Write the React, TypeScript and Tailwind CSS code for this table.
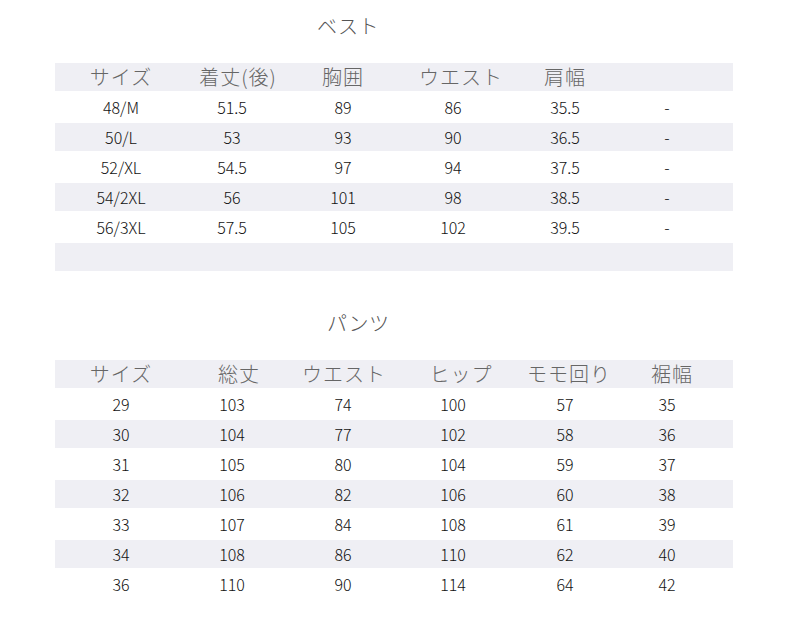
/**
 * サイズ表（ベスト / パンツ）。
 * ヘッダー行は列ごとに幅を指定、データ行は列幅を固定。
 */

const vestHead: Array<{ label: string; w: string }> = [
  { label: 'サイズ', w: 'w-[132px]' },
  { label: '着丈(後)', w: 'w-[102px]' },
  { label: '胸囲', w: 'w-[108px]' },
  { label: 'ウエスト', w: 'w-[128px]' },
  { label: '肩幅', w: 'w-[80px]' },
];

const vestRows: string[][] = [
  ['48/M', '51.5', '89', '86', '35.5', '-'],
  ['50/L', '53', '93', '90', '36.5', '-'],
  ['52/XL', '54.5', '97', '94', '37.5', '-'],
  ['54/2XL', '56', '101', '98', '38.5', '-'],
  ['56/3XL', '57.5', '105', '102', '39.5', '-'],
  ['', '', '', '', '', ''],
];

const pantsHead: Array<{ label: string; w: string }> = [
  { label: 'サイズ', w: 'w-[132px]' },
  { label: '総丈', w: 'w-[104px]' },
  { label: 'ウエスト', w: 'w-[106px]' },
  { label: 'ヒップ', w: 'w-[128px]' },
  { label: 'モモ回り', w: 'w-[88px]' },
  { label: '裾幅', w: 'w-[118px]' },
];

const pantsRows: string[][] = [
  ['29', '103', '74', '100', '57', '35'],
  ['30', '104', '77', '102', '58', '36'],
  ['31', '105', '80', '104', '59', '37'],
  ['32', '106', '82', '106', '60', '38'],
  ['33', '107', '84', '108', '61', '39'],
  ['34', '108', '86', '110', '62', '40'],
  ['36', '110', '90', '114', '64', '42'],
];

// データ列の幅（両表共通）
const cellW = ['w-[110px]', 'w-[112px]', 'w-[110px]', 'w-[110px]', 'w-[114px]', 'w-[90px]'];

export default function App() {
  return (
    <div
      className="h-[624px] w-[790px] overflow-hidden bg-white"
      style={{ fontFamily: '"Noto Sans CJK JP", "Noto Sans", sans-serif' }}
    >
      <div className="pt-[12px]">
        <Title className="pl-[317px]">ベスト</Title>
        <SizeTable head={vestHead} rows={vestRows} className="mt-[23px]" />
      </div>

      <div className="mt-[38px]">
        <Title className="pl-[327px]">パンツ</Title>
        <SizeTable head={pantsHead} rows={pantsRows} className="mt-[23px]" />
      </div>
    </div>
  );
}

function Title({ children, className = '' }: { children: React.ReactNode; className?: string }) {
  return (
    <p className={`h-[28px] text-[20px] font-light leading-[28px] tracking-[0.5px] text-[#555] ${className}`}>
      {children}
    </p>
  );
}

function SizeTable({
  head,
  rows,
  className = '',
}: {
  head: Array<{ label: string; w: string }>;
  rows: string[][];
  className?: string;
}) {
  return (
    <div className={`mx-[55px] flex w-[678px] flex-col gap-[2px] ${className}`}>
      <div className="flex h-[28px] items-center bg-[#efeff4]">
        {head.map(h => (
          <div
            key={h.label}
            className={`${h.w} text-center text-[20px] font-light leading-[28px] tracking-[1px] text-[#666]`}
          >
            {h.label}
          </div>
        ))}
      </div>
      {rows.map((r, i) => (
        <div
          key={i}
          className={`flex h-[28px] items-center pl-[11px] ${i % 2 === 1 ? 'bg-[#efeff4]' : 'bg-white'}`}
        >
          {r.map((c, j) => (
            <div
              key={j}
              className={`${cellW[j]} text-center text-[16px] font-light leading-[28px] text-[#111]`}
            >
              {c}
            </div>
          ))}
        </div>
      ))}
    </div>
  );
}
